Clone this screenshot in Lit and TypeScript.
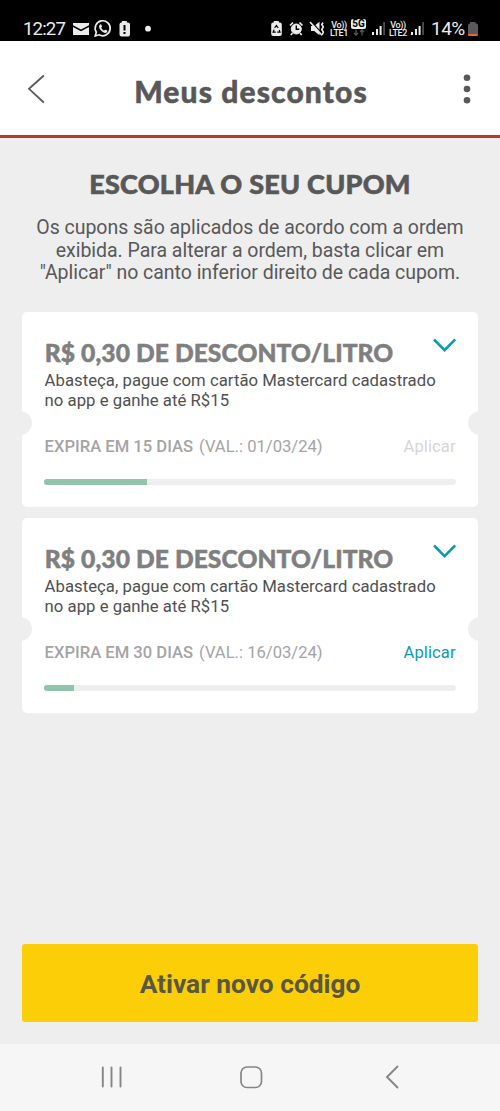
import { LitElement, html, css } from "lit";
import { customElement, property } from "lit/decorators.js";

@customElement("status-bar")
class StatusBar extends LitElement {
  static styles = css`
    :host { display: flex; align-items: flex-start; height: 40.5px; box-sizing: border-box; padding: 18px 20px 0 23px; background: #000; color: #ececec; font-family: Roboto, sans-serif; }
    svg { display: block; flex: none; height: 20px; }
    .time, .pct { flex: none; font-size: 18.6px; line-height: 22px; white-space: nowrap; }
    .time { width: 50px; letter-spacing: -0.85px; }
    .pct { width: 37px; margin-left: 4px; font-size: 19px; letter-spacing: -0.5px; }
    .grow { flex: 1; }
    .mute { margin-right: 1px; }
    .lte { flex: none; width: 20px; padding-top: 3px; font-size: 9px; line-height: 8px; font-weight: 500; text-align: center; letter-spacing: -0.4px; white-space: nowrap; }
    .lte.second { margin-right: 2px; }
    .sig { margin-right: 2px; }
    .g5 { flex: none; width: 19px; margin-right: 3px; }
    .g5 b { display: block; width: 15px; height: 10px; margin: 1px auto 0; border-radius: 2px; background: #ececec; color: #000; font-size: 10px; line-height: 10.5px; text-align: center; }
    .g5 svg { height: 7px; margin: 0 auto; }
  `;
  signal() {
    return html`<svg class="sig" width="15" viewBox="371 18 15 20"><g fill="#ececec"><rect x="372" y="32" width="2" height="3"/><rect x="376" y="29" width="2" height="6"/><rect x="379.6" y="26" width="2" height="9"/></g><rect x="383.2" y="22" width="1.8" height="13" fill="#4b4b4b"/></svg>`;
  }
  render() {
    return html`
      <span class="time">12:27</span>
      <svg width="18" viewBox="73 18 18 20"><path fill="#ececec" d="M73 23h16v2.2l-8 4.3-8-4.3zM73 27l8 4.3 8-4.3v8H73z"/></svg>
      <svg width="26" viewBox="91 18 26 20"><path fill="none" stroke="#ececec" stroke-width="1.7" d="M95.2 36l1.1-3.8a7.5 7.5 0 1 1 2.7 2.6z"/><path fill="#ececec" d="M99.8 24.7c.7-.6 1.3-.4 1.6.2l.6 1.4c.1.5-.4 1-.8 1.4.7 1.4 1.7 2.3 3 2.9.4-.4.8-1.1 1.3-.9l1.6.8c.7.5-.1 2-1.1 2.3-3 .8-7.8-4.2-6.8-7z"/></svg>
      <svg width="26" viewBox="117 18 26 20"><path fill="#ececec" d="M121.8 21h5v1.5h1.2q2 0 2 2v10q0 2-2 2h-6.5q-2 0-2-2v-10q0-2 2-2h.3z"/><path stroke="#000" stroke-width="2" d="M124.5 25v5.5M124.5 32v2"/></svg>
      <svg width="10" viewBox="143 18 10 20"><circle cx="148" cy="28.7" r="2.9" fill="#ececec"/></svg>
      <span class="grow"></span>
      <svg width="18" viewBox="271 18 18 20"><path fill="#ececec" d="M273.8 21h5v1.5h1q2 0 2 2v9.5q0 2-2 2h-6.6q-2 0-2-2v-9.5q0-2 2-2h.6z"/><path fill="none" stroke="#000" stroke-width="1.2" d="M274.6 28l1.8-2.5 1.9 2.5M279.2 30l.8 2.2h-2.8M275.8 32.2h-2.7l1-2.6"/></svg>
      <svg width="20" viewBox="289 18 20 20"><circle cx="296.3" cy="29" r="5" fill="#ececec" stroke="#ececec"/><path fill="none" stroke="#ececec" stroke-width="1.7" d="M290 25.5l3-3M299.5 22.5l3 3M292.5 33.2l-1.7 1.8M300 33.2l1.7 1.8"/><path fill="none" stroke="#000" stroke-width="1.4" d="M296.3 25.5v3.8h3"/></svg>
      <svg class="mute" width="19" viewBox="309 18 19 20"><path fill="#ececec" d="M311 26h3.2l5.3-4.2v13.4l-5.3-4.2H311z"/><path stroke="#000" stroke-width="1.4" d="M311 21.2l12 13.6"/><path stroke="#ececec" stroke-width="1.6" d="M310 22l12 13.3"/><path fill="none" stroke="#ececec" stroke-width="1.6" d="M323 22.500l-1.200 2 1.500 2.500-1.500 2.500 1.500 2.500-1.300 3"/></svg>
      <span class="lte">Vo))<br>LTE1</span>
      <span class="g5"><b>5G</b><svg width="12" viewBox="0 0 12 7"><path fill="none" stroke="#555" stroke-width="1.3" d="M3 .5v5.5M1 4l2 2 2-2M9 6.5V1M7 3l2-2 2 2"/></svg></span>
      ${this.signal()}
      <span class="lte second">Vo))<br>LTE2</span>
      ${this.signal()}
      <span class="pct">14%</span>
      <svg width="12" viewBox="469 18 12 20"><path fill="#5a5a5a" d="M471 22h5.5v1.5h1q1.5 0 1.5 2V34h-10v-8.5q0-2 2-2z"/><path fill="#ee6234" d="M469 34h10v.5q0 1.5-1.5 1.5h-7q-1.5 0-1.5-1.5z"/></svg>
    `;
  }
}

@customElement("coupon-card")
class CouponCard extends LitElement {
  @property() days = "";
  @property() until = "";
  @property({ type: Number }) progress = 0;
  @property({ type: Boolean }) active = false;
  static styles = css`
    :host { display: block; position: relative; height: 195px; box-sizing: border-box; padding: 28px 22.3px 0; border-radius: 5px; background: #fff; overflow: hidden; font-family: Roboto, sans-serif; }
    :host::before, :host::after { content: ""; position: absolute; top: 98.5px; width: 24px; height: 24px; border-radius: 50%; background: #eee; }
    :host::before { left: -14px; }
    :host::after { right: -14px; }
    .top { display: flex; justify-content: space-between; height: 31px; }
    h2 { margin: 0; padding-left: 0.5px; font: 900 24.6px/26px Lato, sans-serif; letter-spacing: 0.08px; -webkit-text-stroke: 0.5px #7f7f7f; color: #7f7f7f; white-space: nowrap; }
    .chev { display: block; margin-top: -4px; }
    p { margin: 0; font-size: 16.7px; line-height: 19.5px; letter-spacing: 0.04px; padding-left: 0.3px; color: #505050; white-space: nowrap; }
    .row { display: flex; justify-content: space-between; margin-top: 27px; padding-left: 0.3px; font-size: 16.6px; line-height: 20px; color: #a4a4a4; white-space: nowrap; }
    .row b { font-weight: 500; margin-right: 6px; }
    .apply { color: #d6d6d6; letter-spacing: 0.1px; }
    .apply.on { color: #0b9bb0; }
    .track { height: 6px; margin-top: 22px; border-radius: 3px; background: #eee; overflow: hidden; }
    .fill { height: 6px; background: #90c4ab; }
  `;
  render() {
    return html`
      <div class="top"><h2>R$ 0,30 DE DESCONTO/LITRO</h2>
        <svg class="chev" width="23" height="20" viewBox="433 336 23 20"><path fill="none" stroke="#0b9bb0" stroke-width="2.6" d="M434 339.5l10.6 10.6 10.6-10.6"/></svg></div>
      <p>Abasteça, pague com cartão Mastercard cadastrado<br>no app e ganhe até R$15</p>
      <div class="row"><span><b>EXPIRA EM ${this.days} DIAS</b>(VAL.: ${this.until})</span><span class="apply ${this.active ? "on" : ""}">Aplicar</span></div>
      <div class="track"><div class="fill" style="width:${this.progress}%"></div></div>
    `;
  }
}

@customElement("app-root")
class AppRoot extends LitElement {
  static styles = css`
    :host { display: flex; flex-direction: column; height: 1111px; background: #eee; font-family: Roboto, sans-serif; color: #585858; overflow: hidden; }
    status-bar { flex: none; }
    header { flex: none; display: flex; align-items: center; justify-content: space-between; height: 97.5px; box-sizing: border-box; padding: 3px 27px 0 26px; background: #fff; border-bottom: 3px solid #c2371d; }
    header svg { display: block; }
    h1 { margin: 3px 5px 0 0; font: 900 30px/34px Lato, sans-serif; letter-spacing: 1.1px; -webkit-text-stroke: 0.5px #585858; white-space: nowrap; }
    main { flex: 1; display: flex; flex-direction: column; padding: 0 22px; }
    h2 { margin: 30px 0 0; font: 900 27px/32px Lato, sans-serif; letter-spacing: 0.26px; -webkit-text-stroke: 0.6px #585858; text-align: center; white-space: nowrap; }
    .intro { margin: 17px 0 0; font-size: 19.5px; line-height: 22.7px; letter-spacing: -0.03px; text-align: center; white-space: nowrap; }
    .cards { display: flex; flex-direction: column; gap: 11px; margin-top: 27px; }
    button { height: 78px; margin: auto 0 22.6px; padding: 2px 0 0; border: 0; border-radius: 3px; background: #fbce07; color: #595740; font: 700 26.3px/30px Roboto, sans-serif; }
    nav { flex: none; display: flex; align-items: center; justify-content: space-between; height: 66.7px; box-sizing: border-box; padding: 0 98px 1.5px 99px; background: #f6f6f6; }
    nav svg { display: block; }
  `;
  render() {
    return html`
      <status-bar></status-bar>
      <header>
        <svg width="20" height="30" viewBox="26 75 20 30"><path fill="none" stroke="#585858" stroke-width="1.8" d="M43.8 76.5L29 89.8 43.8 103.5"/></svg>
        <h1>Meus descontos</h1>
        <svg width="12" height="32" viewBox="0 0 12 32"><g fill="#585858"><circle cx="6" cy="4.7" r="3.3"/><circle cx="6" cy="16" r="3.3"/><circle cx="6" cy="27.3" r="3.3"/></g></svg>
      </header>
      <main>
        <h2>ESCOLHA O SEU CUPOM</h2>
        <p class="intro">Os cupons são aplicados de acordo com a ordem<br>exibida. Para alterar a ordem, basta clicar em<br>"Aplicar" no canto inferior direito de cada cupom.</p>
        <div class="cards">
          <coupon-card days="15" until="01/03/24" progress="25"></coupon-card>
          <coupon-card days="30" until="16/03/24" progress="7.1" active></coupon-card>
        </div>
        <button>Ativar novo código</button>
      </main>
      <nav>
        <svg width="24" height="24" viewBox="0 0 24 24"><path stroke="#858585" stroke-width="1.9" stroke-linecap="round" d="M3.8 2.500v19M12.500 2.500v19M21.500 2.500v19"/></svg>
        <svg width="24" height="24" viewBox="0 0 24 24"><rect x="2" y="2" width="20.500" height="20.500" rx="6" fill="none" stroke="#858585" stroke-width="1.700"/></svg>
        <svg width="24" height="24" viewBox="0 0 24 24"><path fill="none" stroke="#858585" stroke-width="1.900" stroke-linecap="round" d="M19.500 1.500L9 12l10.500 10.500"/></svg>
      </nav>
    `;
  }
}
